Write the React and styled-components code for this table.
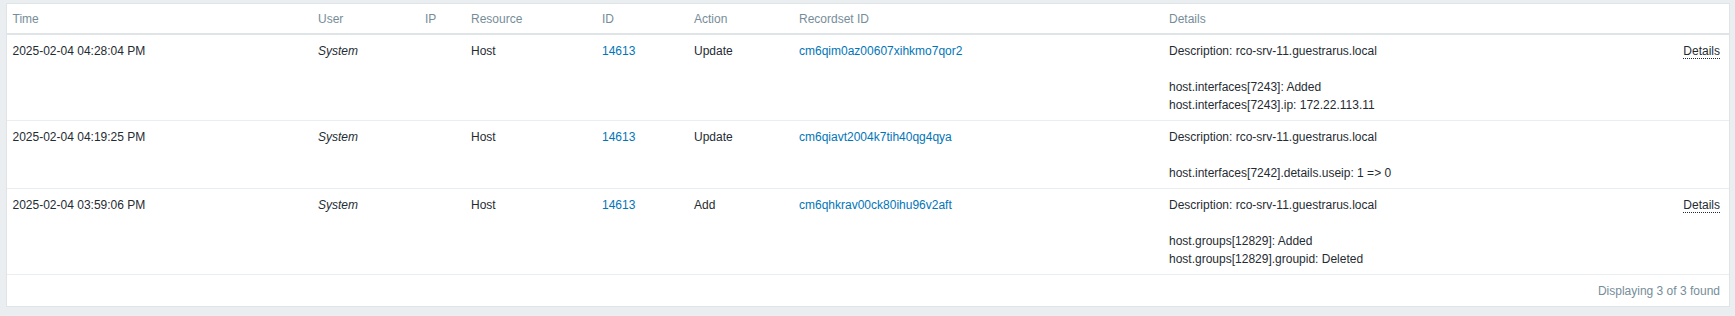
import styled, {createGlobalStyle} from 'styled-components';

const GlobalStyle = createGlobalStyle`
    body {
        margin: 0;
        background: #ebeef0;
        font-family: "Liberation Sans", Arial, sans-serif;
        font-size: 12px;
        color: #1f2c33;
    }
`;

const Page = styled.div`
    padding: 3px 5px 11px 6px;
`;

const Panel = styled.div`
    background: #fff;
    border: 1px solid #dfe4e7;
`;

const Table = styled.table`
    width: 100%;
    border-collapse: collapse;
    table-layout: fixed;
`;

const HeadCell = styled.th`
    text-align: left;
    font-weight: normal;
    color: #768d99;
    line-height: 18px;
    padding: 5.5px 5.5px;
    border-bottom: 2px solid #dfe4e7;
    white-space: nowrap;
`;

const Row = styled.tr`
    border-bottom: 1px solid #ebeef0;
`;

const Cell = styled.td`
    vertical-align: top;
    line-height: 18px;
    padding: 7px 5.5px 6px;
    font-style: ${p => (p.$italic ? 'italic' : 'normal')};
    white-space: nowrap;
`;

const Link = styled.span`
    color: #0275b8;
    cursor: pointer;
`;

const DetailsWrap = styled.div`
    display: flex;
    justify-content: space-between;
    align-items: flex-start;
    padding-right: 3.5px;
`;

const Lines = styled.div`
    display: flex;
    flex-direction: column;
`;

const Gap = styled.div`
    height: 18px;
`;

const MoreLink = styled.span`
    color: #1f2c33;
    border-bottom: 1px dotted #1f2c33;
    line-height: 14px;
    margin-top: 2px;
    cursor: pointer;
`;

const Footer = styled.div`
    text-align: right;
    color: #768d99;
    line-height: 18px;
    padding: 6.5px 9px 6.5px 0;
`;

const columns = [
    {title: 'Time', width: 305.5},
    {title: 'User', width: 107},
    {title: 'IP', width: 46},
    {title: 'Resource', width: 131},
    {title: 'ID', width: 92},
    {title: 'Action', width: 105},
    {title: 'Recordset ID', width: 370},
    {title: 'Details'},
];

const records = [
    {
        time: '2025-02-04 04:28:04 PM',
        action: 'Update',
        recordset: 'cm6qim0az00607xihkmo7qor2',
        lines: ['host.interfaces[7243]: Added', 'host.interfaces[7243].ip: 172.22.113.11'],
        more: true,
    },
    {
        time: '2025-02-04 04:19:25 PM',
        action: 'Update',
        recordset: 'cm6qiavt2004k7tih40qg4qya',
        lines: ['host.interfaces[7242].details.useip: 1 => 0'],
        more: false,
    },
    {
        time: '2025-02-04 03:59:06 PM',
        action: 'Add',
        recordset: 'cm6qhkrav00ck80ihu96v2aft',
        lines: ['host.groups[12829]: Added', 'host.groups[12829].groupid: Deleted'],
        more: true,
    },
];

const App = () => {
    return (
        <Page>
            <GlobalStyle />
            <Panel>
                <Table>
                    <colgroup>
                        {columns.map(c => (
                            <col key={c.title} style={c.width ? {width: c.width} : undefined} />
                        ))}
                    </colgroup>
                    <thead>
                        <tr>
                            {columns.map(c => <HeadCell key={c.title}>{c.title}</HeadCell>)}
                        </tr>
                    </thead>
                    <tbody>
                        {records.map(r => (
                            <Row key={r.recordset}>
                                <Cell>{r.time}</Cell>
                                <Cell $italic>System</Cell>
                                <Cell></Cell>
                                <Cell>Host</Cell>
                                <Cell><Link>14613</Link></Cell>
                                <Cell>{r.action}</Cell>
                                <Cell><Link>{r.recordset}</Link></Cell>
                                <Cell>
                                    <DetailsWrap>
                                        <Lines>
                                            <div>Description: rco-srv-11.guestrarus.local</div>
                                            <Gap />
                                            {r.lines.map(l => <div key={l}>{l}</div>)}
                                        </Lines>
                                        {r.more && <MoreLink>Details</MoreLink>}
                                    </DetailsWrap>
                                </Cell>
                            </Row>
                        ))}
                    </tbody>
                </Table>
                <Footer>Displaying 3 of 3 found</Footer>
            </Panel>
        </Page>
    );
};

export default App;
